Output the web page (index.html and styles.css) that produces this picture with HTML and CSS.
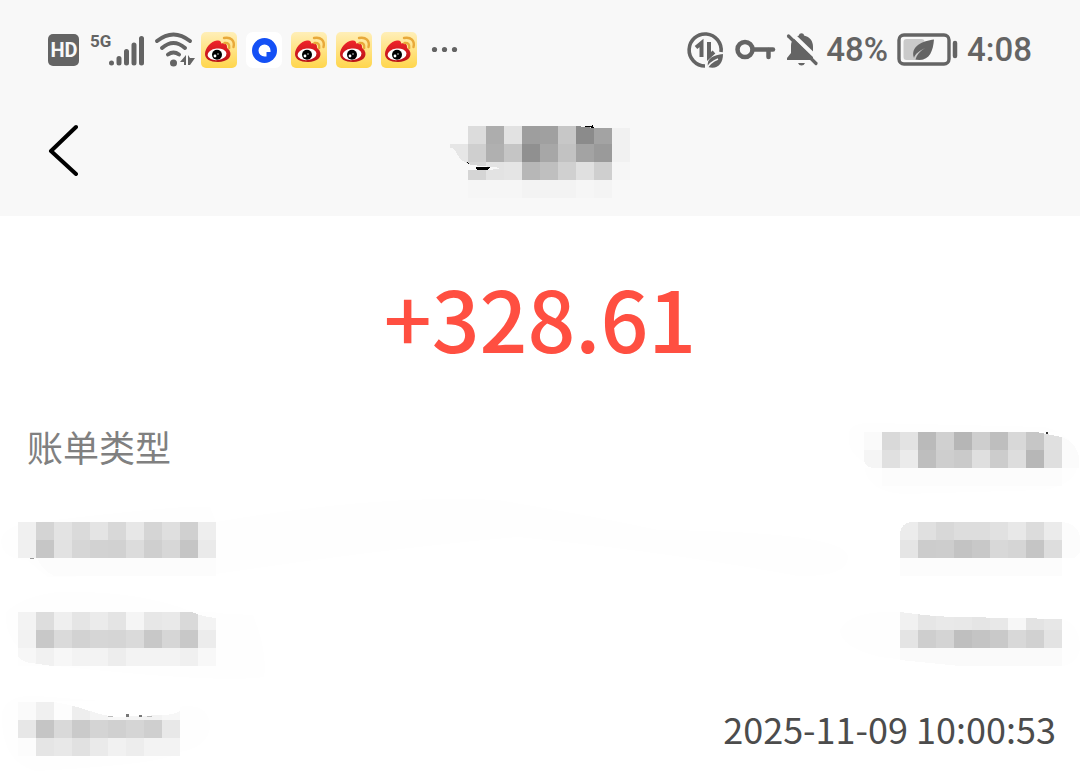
FILE: index.html
```html
<!DOCTYPE html>
<html lang="zh-CN">
<head>
    <meta charset="UTF-8">
    <meta name="viewport" content="width=device-width, initial-scale=1.0">
    <title>账单详情</title>
    <link rel="stylesheet" href="styles.css">
</head>
<body>
    <!-- shared app icon -->
    <svg class="defs" aria-hidden="true">
        <defs>
            <linearGradient id="gold" x1="0" y1="0" x2="0" y2="1">
                <stop offset="0" stop-color="#ffefb9"/>
                <stop offset="1" stop-color="#ffd64c"/>
            </linearGradient>
            <linearGradient id="red" x1="0" y1="0" x2="0" y2="1">
                <stop offset="0" stop-color="#f0252b"/>
                <stop offset="1" stop-color="#b81216"/>
            </linearGradient>
            <symbol id="weibo" viewBox="0 0 36 36">
                <rect width="36" height="36" rx="5" fill="url(#gold)"/>
                <path d="M4 22C4 16 10 9 16 8.500C19 8 20.500 9.500 20 11.500C23 10.500 26.500 11.500 26 15C26 16.500 27 16.500 28.500 18.500C32 25 26 30 17 30C9 30 4 27 4 22Z" fill="url(#red)"/>
                <ellipse cx="16" cy="22.300" rx="9.500" ry="5.800" fill="#fff" transform="rotate(-6 16 22)"/>
                <circle cx="16" cy="22.700" r="5" fill="#000"/>
                <circle cx="14" cy="24" r="1.400" fill="#fff"/>
                <circle cx="17" cy="22" r="0.700" fill="#fff"/>
                <path d="M23.500 11C27 10.500 29 12.500 28.200 16M23 6C30 4.500 34 9 32.500 15" fill="none" stroke="#e8a93a" stroke-width="2.400" stroke-linecap="round"/>
            </symbol>
        </defs>
    </svg>

    <header class="top">
        <div class="status-bar">
            <div class="status-group">
                <svg class="icon" width="32" height="36" viewBox="0 0 32 36">
                    <rect y="2" width="31" height="32" rx="5" fill="#646464"/>
                    <text class="hd-text" x="16" y="25">HD</text>
                </svg>
                <svg class="icon" width="56" height="36" viewBox="0 0 56 36">
                    <text class="net-text" x="1" y="15">5G</text>
                    <path d="M22.500 31.500V31.500M30 31.500V27M37.500 31.500V20M45 31.500V13.500M52.500 31.500V7" transform="translate(0 -0.500)" fill="none" stroke="#646464" stroke-width="5" stroke-linecap="round"/>
                </svg>
                <svg class="icon" width="38" height="36" viewBox="0 0 38 36">
                    <path d="M3 9Q19.500 -4 36 9M8 16Q19.500 6 31 16M14 22.500Q19.500 18.500 25 22.500" fill="none" stroke="#646464" stroke-width="4" stroke-linecap="round"/>
                    <circle cx="19.500" cy="31" r="3.500" fill="#646464"/>
                    <path d="M32 23V33H30V30H26ZM34 23V33H36L41 26H36Z" fill="#646464"/>
                </svg>
                <svg class="icon" width="36" height="36"><use href="#weibo"/></svg>
                <svg class="icon" width="36" height="36" viewBox="0 0 36 36">
                    <rect width="36" height="36" rx="7" fill="#fff"/>
                    <circle cx="18.500" cy="18.500" r="12.500" fill="#1450f5"/>
                    <path d="M18.500 12.500A6 6 0 1 0 18.500 24.500H20.500V20H24.500V18.500A6 6 0 0 0 18.500 12.500Z" fill="#fff"/>
                </svg>
                <svg class="icon" width="36" height="36"><use href="#weibo"/></svg>
                <svg class="icon" width="36" height="36"><use href="#weibo"/></svg>
                <svg class="icon" width="36" height="36"><use href="#weibo"/></svg>
                <svg class="icon" width="36" height="36" viewBox="0 0 36 36" fill="#646464">
                    <circle cx="8.500" cy="17.500" r="2.600"/>
                    <circle cx="18.500" cy="17.500" r="2.600"/>
                    <circle cx="28.500" cy="17.500" r="2.600"/>
                </svg>
            </div>
            <div class="status-group">
                <svg class="icon" width="39" height="36" viewBox="0 0 39 36">
                    <path d="M35 20A16 16 0 1 0 19 34" fill="none" stroke="#646464" stroke-width="3.600"/>
                    <path d="M10 15.500L15.500 11V25M23 10V24.500L28 20" fill="none" stroke="#646464" stroke-width="4"/>
                    <path d="M37 22C28 23 20 26 22 35C31 38 37 32 37 22Z" fill="#646464"/>
                    <path d="M20.500 37C23 32 27 29 32 27" fill="none" stroke="#f8f8f8" stroke-width="1.500"/>
                </svg>
                <svg class="icon" width="42" height="36" viewBox="0 0 42 36" fill="none" stroke="#646464">
                    <circle cx="11" cy="17.500" r="7.500" stroke-width="4.500"/>
                    <path d="M19 17.500H39" stroke-width="4.500" stroke-linecap="round"/>
                    <path d="M34.500 18V25" stroke-width="4.500" stroke-linecap="round"/>
                </svg>
                <svg class="icon" width="32" height="36" viewBox="0 0 32 36">
                    <path d="M2 28V26L6 21V14C6 8 10 4.500 14 3.500C14 0.500 19 0.500 19 3.500C25 5 28 9 28 15V28Z" fill="#646464"/>
                    <path d="M13 31H20Q19 33.500 16.500 33.500Q14 33.500 13 31Z" fill="#646464"/>
                    <path d="M6 1L35 29" stroke="#f8f8f8" stroke-width="4"/>
                    <path d="M28 25L34 32H28Z" fill="#f8f8f8"/>
                    <path d="M3.500 4L31 31.500" stroke="#646464" stroke-width="3.200" stroke-linecap="round"/>
                </svg>
                <span class="status-text">48%</span>
                <svg class="icon" width="61" height="36" viewBox="0 0 61 36">
                    <rect x="2" y="3" width="50" height="29" rx="5" fill="none" stroke="#646464" stroke-width="3.400"/>
                    <rect x="6.500" y="7" width="21" height="21" rx="3" fill="#cacaca"/>
                    <path d="M37 7.500C26 9 13 14 17 26C18 22 22 19 28 16C22 20 20 23 18.500 27.500C32 30 36 20 37 7.500Z" fill="#646464"/>
                    <path d="M58 11V24" stroke="#646464" stroke-width="4.500" stroke-linecap="round"/>
                </svg>
                <span class="status-text">4:08</span>
            </div>
        </div>
        <nav class="nav-bar">
            <button class="back" type="button" aria-label="返回">
                <svg width="30" height="52" viewBox="0 0 30 52">
                    <path d="M28 3L3 27L28 50" fill="none" stroke="#000" stroke-width="4" stroke-linecap="round" stroke-linejoin="round"/>
                </svg>
            </button>
            <svg class="mosaic" width="180" height="84" viewBox="0 -18 180 84">
                <rect x="18" fill="#dcdcdc"/><rect x="36" fill="#adadad"/><rect x="54" fill="#e2e2e2"/><rect x="72" fill="#9e9e9e"/><rect x="90" fill="#a0a0a0"/><rect x="108" fill="#c7c7c7"/><rect x="126" fill="#8b8b8b"/><rect x="144" fill="#a3a3a3"/><rect x="162" fill="#f1f1f1"/>
                <rect y="18" fill="#e6e6e6"/><rect x="18" y="18" fill="#cfcfcf"/><rect x="36" y="18" fill="#b0b0b0"/><rect x="54" y="18" fill="#c5c5c5"/><rect x="72" y="18" fill="#909090"/><rect x="90" y="18" fill="#a7a7a7"/><rect x="108" y="18" fill="#c2c2c2"/><rect x="126" y="18" fill="#a3a3a3"/><rect x="144" y="18" fill="#9a9a9a"/><rect x="162" y="18" fill="#f1f1f1"/>
                <rect x="18" y="36" fill="#d5d5d5"/><rect x="36" y="36" fill="#e3e3e3"/><rect x="54" y="36" fill="#e5e5e5"/><rect x="72" y="36" fill="#b7b7b7"/><rect x="90" y="36" fill="#bfbfbf"/><rect x="108" y="36" fill="#d0d0d0"/><rect x="126" y="36" fill="#e0e0e0"/><rect x="144" y="36" fill="#cfcfcf"/><rect x="162" y="36" fill="#f6f6f6"/>
                <rect x="18" y="54" fill="#f6f6f6"/><rect x="36" y="54" fill="#f6f6f6"/><rect x="54" y="54" fill="#f6f6f6"/><rect x="72" y="54" fill="#f3f3f3"/><rect x="90" y="54" fill="#f3f3f3"/><rect x="108" y="54" fill="#f3f3f3"/><rect x="126" y="54" fill="#f6f6f6"/><rect x="144" y="54" fill="#f4f4f4"/>
                <path d="M0 22Q5 22 7 28Q12 37 22 39L52 42L40 44H0ZM126 0H180V2H144Z" fill="#f8f8f8"/>
                <path d="M22 38L35 39V36H14Z" fill="#d5d5d5"/>
                <path d="M15 35L19 37L18 38ZM26 41H40L38 44H27ZM132 0L141 0L142 -1H143L144 2Z" fill="#000"/>
            </svg>
        </nav>
    </header>

    <main class="bill">
        <p class="amount">+328.61</p>

        <dl class="details">
            <div class="row">
                <dt>账单类型</dt>
                <dd>
                    <svg class="mosaic" width="198" height="72" viewBox="0 -19 198 72">
                        <path d="M-15 0Q-12 -10 10 -9L180 -5Q212 2 214 30Q214 52 180 58L40 62Q0 60 0 30Q-18 20 -15 0Z" fill="#fefefe"/>
                        <rect fill="#fafafa"/><rect x="18" fill="#d9d9d9"/><rect x="36" fill="#e3e3e3"/><rect x="54" fill="#bababa"/><rect x="72" fill="#d0d0d0"/><rect x="90" fill="#b6b6b6"/><rect x="108" fill="#cecece"/><rect x="126" fill="#bebebe"/><rect x="144" fill="#d8d8d8"/><rect x="162" fill="#c6c6c6"/><rect x="180" fill="#e0e0e0"/>
                        <rect y="18" fill="#f5f5f5"/><rect x="18" y="18" fill="#e0e0e0"/><rect x="36" y="18" fill="#ebebeb"/><rect x="54" y="18" fill="#bebebe"/><rect x="72" y="18" fill="#cecece"/><rect x="90" y="18" fill="#cacaca"/><rect x="108" y="18" fill="#dfdfdf"/><rect x="126" y="18" fill="#cccccc"/><rect x="144" y="18" fill="#dddddd"/><rect x="162" y="18" fill="#b7b7b7"/><rect x="180" y="18" fill="#dfdfdf"/>
                        <path d="M18 36H198V54H18Z" fill="#fcfcfc"/>
                        <path d="M198 5Q212 10 215 25V36H198Z" fill="#fbfbfb"/>
                        <path d="M172 0L198 5V0ZM0 28Q1 35 9 36H0Z" fill="#fff"/>
                        <circle cx="183" cy="1" r="1.500" fill="#333"/>
                    </svg>
                </dd>
            </div>
            <div class="row">
                <dt>
                    <svg class="mosaic" width="198" height="72" viewBox="0 -15 198 72">
                        <path d="M-17 20Q-16 2 20 0Q170 -18 192 -15L198 0Q360 -28 480 -22Q580 -5 640 8Q830 10 830 35Q830 55 780 54Q650 30 500 15Q380 25 198 52L30 55Q15 44 10 38Q-15 38 -17 20Z" fill="#fefefe"/>
                        <rect fill="#f0f0f0"/><rect x="18" fill="#d4d4d4"/><rect x="36" fill="#e3e3e3"/><rect x="54" fill="#dadada"/><rect x="72" fill="#e4e4e4"/><rect x="90" fill="#d8d8d8"/><rect x="108" fill="#e7e7e7"/><rect x="126" fill="#d5d5d5"/><rect x="144" fill="#dfdfdf"/><rect x="162" fill="#d0d0d0"/><rect x="180" fill="#eeeeee"/>
                        <rect y="18" fill="#f0f0f0"/><rect x="18" y="18" fill="#c6c6c6"/><rect x="36" y="18" fill="#e2e2e2"/><rect x="54" y="18" fill="#d6d6d6"/><rect x="72" y="18" fill="#d2d2d2"/><rect x="90" y="18" fill="#d1d1d1"/><rect x="108" y="18" fill="#dcdcdc"/><rect x="126" y="18" fill="#cfcfcf"/><rect x="144" y="18" fill="#d7d7d7"/><rect x="162" y="18" fill="#c5c5c5"/><rect x="180" y="18" fill="#eaeaea"/>
                        <path d="M19 36H198V54H36Q24 48 19 36Z" fill="#fcfcfc"/>
                        <path d="M12 36H16V37H12Z" fill="#999"/>
                    </svg>
                </dt>
                <dd>
                    <svg class="mosaic" width="162" height="72" viewBox="0 -15 162 72">
                        <path d="M0 36H162V54H0ZM162 0Q178 2 180 15V30L174 36H162Z" fill="#fcfcfc"/>
                        <rect fill="#ececec"/><rect x="18" fill="#e0e0e0"/><rect x="36" fill="#d8d8d8"/><rect x="54" fill="#dddddd"/><rect x="72" fill="#dddddd"/><rect x="90" fill="#e1e1e1"/><rect x="108" fill="#e8e8e8"/><rect x="126" fill="#dcdcdc"/><rect x="144" fill="#ebebeb"/>
                        <rect y="18" fill="#e5e5e5"/><rect x="18" y="18" fill="#cccccc"/><rect x="36" y="18" fill="#cdcdcd"/><rect x="54" y="18" fill="#c3c3c3"/><rect x="72" y="18" fill="#c8c8c8"/><rect x="90" y="18" fill="#d8d8d8"/><rect x="108" y="18" fill="#d5d5d5"/><rect x="126" y="18" fill="#c5c5c5"/><rect x="144" y="18" fill="#dddddd"/>
                        <path d="M0 10Q2 2 10 0H0Z" fill="#fff"/>
                    </svg>
                </dd>
            </div>
            <div class="row">
                <dt>
                    <svg class="mosaic" width="198" height="72" viewBox="0 -11 198 72">
                        <path d="M-12 0Q5 -16 40 -20Q120 -22 175 0L235 3Q250 40 246 65Q200 72 20 52Q-15 30 -12 0Z" fill="#fefefe"/>
                        <rect fill="#f3f3f3"/><rect x="18" fill="#dddddd"/><rect x="36" fill="#efefef"/><rect x="54" fill="#e5e5e5"/><rect x="72" fill="#ebebeb"/><rect x="90" fill="#e4e4e4"/><rect x="108" fill="#f5f5f5"/><rect x="126" fill="#e7e7e7"/><rect x="144" fill="#e9e9e9"/><rect x="162" fill="#d9d9d9"/><rect x="180" fill="#f3f3f3"/>
                        <rect y="18" fill="#f2f2f2"/><rect x="18" y="18" fill="#c8c8c8"/><rect x="36" y="18" fill="#dadada"/><rect x="54" y="18" fill="#d2d2d2"/><rect x="72" y="18" fill="#d6d6d6"/><rect x="90" y="18" fill="#d5d5d5"/><rect x="108" y="18" fill="#dadada"/><rect x="126" y="18" fill="#c8c8c8"/><rect x="144" y="18" fill="#d6d6d6"/><rect x="162" y="18" fill="#c8c8c8"/><rect x="180" y="18" fill="#ececec"/>
                        <rect y="36" fill="#f7f7f7"/><rect x="18" y="36" fill="#f1f1f1"/><rect x="36" y="36" fill="#f7f7f7"/><rect x="54" y="36" fill="#f3f3f3"/><rect x="72" y="36" fill="#f3f3f3"/><rect x="90" y="36" fill="#ededed"/><rect x="108" y="36" fill="#f3f3f3"/><rect x="126" y="36" fill="#f3f3f3"/><rect x="144" y="36" fill="#f3f3f3"/><rect x="162" y="36" fill="#f0f0f0"/><rect x="180" y="36" fill="#f8f8f8"/>
                        <path d="M174 0Q185 5 198 6V0ZM0 44Q5 51 14 51L34 54H0Z" fill="#fefefe"/>
                    </svg>
                </dt>
                <dd>
                    <svg class="mosaic" width="162" height="72" viewBox="0 -11 162 72">
                        <path d="M-60 18Q-50 -2 0 0L162 7Q180 12 180 36Q178 52 162 54H60L-20 45Q-60 35 -60 18Z" fill="#fefefe"/>
                        <rect fill="#f1f1f1"/><rect x="18" fill="#e6e6e6"/><rect x="36" fill="#e9e9e9"/><rect x="54" fill="#e8e8e8"/><rect x="72" fill="#e5e5e5"/><rect x="90" fill="#e8e8e8"/><rect x="108" fill="#f7f7f7"/><rect x="126" fill="#e3e3e3"/><rect x="144" fill="#e7e7e7"/>
                        <rect y="18" fill="#e4e4e4"/><rect x="18" y="18" fill="#cecece"/><rect x="36" y="18" fill="#d4d4d4"/><rect x="54" y="18" fill="#bfbfbf"/><rect x="72" y="18" fill="#c4c4c4"/><rect x="90" y="18" fill="#c9c9c9"/><rect x="108" y="18" fill="#d8d8d8"/><rect x="126" y="18" fill="#d1d1d1"/><rect x="144" y="18" fill="#e3e3e3"/>
                        <path d="M0 36H162V54H60L0 48Z" fill="#fafafa"/>
                        <path d="M0 0Q35 5 60 5L162 7V-1H0Z" fill="#fff"/>
                    </svg>
                </dd>
            </div>
            <div class="row">
                <dt>
                    <svg class="mosaic" width="162" height="72" viewBox="0 -7 162 72">
                        <path d="M-16 10Q-10 -8 20 -6L160 5Q192 0 192 25Q190 45 162 50Q150 62 18 69Q-18 60 -16 10Z" fill="#fefefe"/>
                        <rect fill="#fafafa"/><rect x="18" fill="#f0f0f0"/><rect x="36" fill="#fdfdfd"/><rect x="54" fill="#eeeeee"/><rect x="72" fill="#f4f4f4"/><rect x="90" fill="#f8f8f8"/><rect x="108" fill="#f4f4f4"/><rect x="126" fill="#f3f3f3"/><rect x="144" fill="#f7f7f7"/>
                        <rect y="18" fill="#e7e7e7"/><rect x="18" y="18" fill="#c5c5c5"/><rect x="36" y="18" fill="#d9d9d9"/><rect x="54" y="18" fill="#cacaca"/><rect x="72" y="18" fill="#d4d4d4"/><rect x="90" y="18" fill="#d0d0d0"/><rect x="108" y="18" fill="#d5d5d5"/><rect x="126" y="18" fill="#cfcfcf"/><rect x="144" y="18" fill="#e8e8e8"/>
                        <rect y="36" fill="#fcfcfc"/><rect x="18" y="36" fill="#e5e5e5"/><rect x="36" y="36" fill="#e8e8e8"/><rect x="54" y="36" fill="#e1e1e1"/><rect x="72" y="36" fill="#eaeaea"/><rect x="90" y="36" fill="#f1f1f1"/><rect x="108" y="36" fill="#ededed"/><rect x="126" y="36" fill="#f3f3f3"/><rect x="144" y="36" fill="#f3f3f3"/>
                        <path d="M36 0Q55 3 72 9Q86 14 100 15L144 13Q156 13 162 9V-1H36Z" fill="#fff"/>
                        <path d="M108 12H111V15H108ZM121 13H124V15H121Z" fill="#777"/>
                        <path d="M90 14H95V15H90ZM129 14H134V15H129Z" fill="#bbb"/>
                    </svg>
                </dt>
                <dd class="time">2025-11-09 10:00:53</dd>
            </div>
        </dl>
    </main>
</body>
</html>
```

FILE: styles.css
```css
body {
    margin: 0;
    min-height: 100vh;
    background-color: #fff;
    font-family: "Noto Sans CJK SC", sans-serif;
    color: #4c4c4c;
    overflow-x: hidden;
}
.defs {
    position: absolute;
    width: 0;
    height: 0;
}
.top {
    background-color: #f8f8f8;
    padding: 0 48px 16px;
}
.status-bar {
    display: flex;
    justify-content: space-between;
    align-items: center;
    height: 100px;
}
.status-group {
    display: flex;
    align-items: center;
    gap: 9px;
}
.icon {
    display: block;
    flex-shrink: 0;
    overflow: visible;
}
.status-text {
    font-family: Roboto, sans-serif;
    font-size: 33px;
    font-weight: 500;
    line-height: 36px;
    color: #646464;
}
.hd-text {
    font-family: Roboto, sans-serif;
    font-size: 20px;
    font-weight: bold;
    text-anchor: middle;
    fill: #f8f8f8;
}
.net-text {
    font-family: Roboto, sans-serif;
    font-size: 17px;
    font-weight: bold;
    fill: #646464;
}
.nav-bar {
    display: grid;
    grid-template-columns: 1fr auto 1fr;
    align-items: center;
    height: 100px;
}
.back {
    justify-self: start;
    padding: 0;
    border: none;
    background: none;
    cursor: pointer;
}
.back svg {
    display: block;
}
.mosaic {
    display: block;
    overflow: visible;
    shape-rendering: crispEdges;
}
.mosaic rect {
    width: 18px;
    height: 18px;
}
.bill {
    padding: 36px 18px 0;
}
.amount {
    margin: 0;
    font-size: 84px;
    font-weight: 500;
    line-height: 130px;
    text-align: center;
    color: #ff4f41;
}
.details {
    margin: 20px 0 0;
}
.row {
    display: flex;
    justify-content: space-between;
    align-items: center;
    height: 94px;
    font-size: 36px;
    line-height: 48px;
}
.row:first-child dt {
    padding: 0 0 6px 9px;
    color: #808080;
}
.row dd {
    margin: 0;
}
.row .time {
    padding: 0 6px 6px 0;
}
```
